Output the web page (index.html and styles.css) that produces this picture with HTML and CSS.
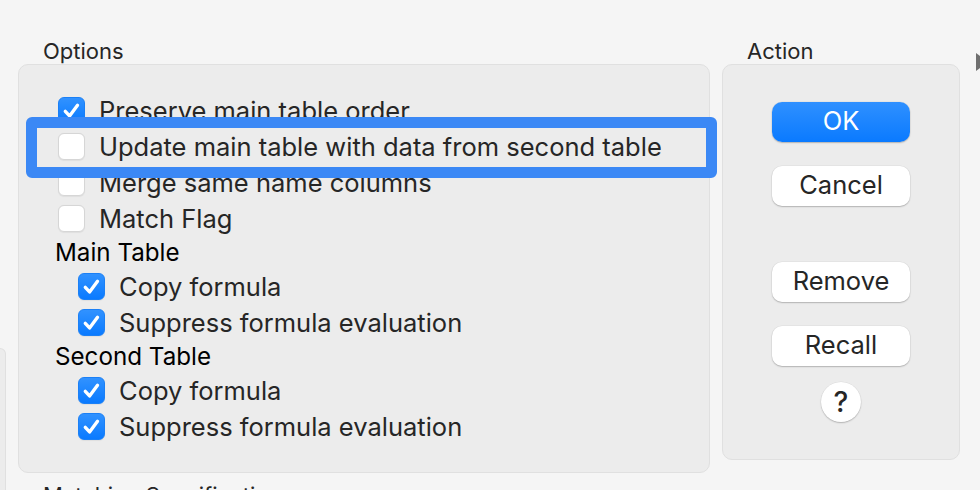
FILE: index.html
```html
<!DOCTYPE html>
<html>
<head>
	<meta charset="UTF-8">
	<title>Merge Tables</title>
	<link rel="stylesheet" href="styles.css">
</head>
<body>
	<div class="window">
		<div class="side-panel"></div>

		<div class="options-col">
			<div class="group-title">Options</div>
			<div class="box options-box">
				<label class="row"><span class="check on"><svg viewBox="0 0 27 27"><path d="M6.8 14.4 L11.4 19.4 L20 7.8"/></svg></span>Preserve main table order</label>
				<label class="row"><span class="check"></span>Update main table with data from second table</label>
				<label class="row"><span class="check"></span>Merge same name columns</label>
				<label class="row"><span class="check"></span>Match Flag</label>

				<div class="sub-title">Main Table</div>
				<label class="row sub"><span class="check on"><svg viewBox="0 0 27 27"><path d="M6.8 14.4 L11.4 19.4 L20 7.8"/></svg></span>Copy formula</label>
				<label class="row sub"><span class="check on"><svg viewBox="0 0 27 27"><path d="M6.8 14.4 L11.4 19.4 L20 7.8"/></svg></span>Suppress formula evaluation</label>

				<div class="sub-title">Second Table</div>
				<label class="row sub"><span class="check on"><svg viewBox="0 0 27 27"><path d="M6.8 14.4 L11.4 19.4 L20 7.8"/></svg></span>Copy formula</label>
				<label class="row sub"><span class="check on"><svg viewBox="0 0 27 27"><path d="M6.8 14.4 L11.4 19.4 L20 7.8"/></svg></span>Suppress formula evaluation</label>
			</div>
			<div class="focus-ring"></div>
			<div class="group-title next">Matching Specification</div>
		</div>

		<div class="action-col">
			<div class="group-title">Action</div>
			<div class="box action-box">
				<button class="btn primary">OK</button>
				<button class="btn cancel">Cancel</button>
				<button class="btn remove">Remove</button>
				<button class="btn recall">Recall</button>
				<button class="btn help">?</button>
			</div>
		</div>

		<div class="disclosure"></div>
	</div>
</body>
</html>
```

FILE: styles.css
```css
body {
	margin: 0;
	background-color: #f5f5f5;
	font-family: Inter, "Noto Sans", sans-serif;
	color: #262626;
	overflow: hidden;
}

.window {
	display: flex;
	align-items: flex-start;
	height: 490px;
	overflow: hidden;
}

.side-panel {
	flex-shrink: 0;
	box-sizing: border-box;
	width: 6px;
	height: 200px;
	margin-top: 348px;
	background-color: #ececec;
	border: 1px solid #e0e0e0;
	border-left: none;
	border-radius: 0 10px 0 0;
}

.options-col {
	position: relative;
	flex-shrink: 0;
	width: 692px;
	margin-left: 12px;
}

.action-col {
	flex-shrink: 0;
	width: 238px;
	margin-left: 12px;
}

.group-title {
	font-size: 22px;
	line-height: 26px;
	margin-top: 38px;
	padding-left: 25px;
	white-space: nowrap;
}

.group-title.next {
	margin-top: 9px;
}

.box {
	box-sizing: border-box;
	background-color: #ececec;
	border: 1px solid #e0e0e0;
	border-radius: 10px;
}

.options-box {
	height: 409px;
	padding: 27px 0 0 39px;
}

.row {
	display: flex;
	align-items: center;
	gap: 14px;
	height: 36px;
	font-size: 25.5px;
	white-space: nowrap;
}

.row.sub {
	padding-left: 20px;
}

.sub-title {
	display: flex;
	align-items: center;
	height: 32px;
	margin-left: -3px;
	font-size: 24.2px;
	color: #000;
}

.check {
	flex-shrink: 0;
	box-sizing: border-box;
	width: 27px;
	height: 27px;
	background-color: #fff;
	border: 1px solid #d6d6d6;
	border-radius: 6px;
	box-shadow: 0 0.5px 1px rgba(0, 0, 0, 0.06);
}

.check.on {
	background: linear-gradient(#3192ff, #0a7aff);
	border-color: #1b80f6;
}

.check svg {
	display: block;
	width: 25px;
	height: 25px;
}

.check svg path {
	fill: none;
	stroke: #fff;
	stroke-width: 3.6;
	stroke-linecap: round;
	stroke-linejoin: round;
}

.focus-ring {
	position: absolute;
	left: 8px;
	top: 117px;
	box-sizing: border-box;
	width: 691px;
	height: 61px;
	border: 11px solid #3b88f5;
	border-radius: 6px;
}

.action-box {
	display: flex;
	flex-direction: column;
	align-items: center;
	height: 396px;
	padding-top: 37px;
}

.btn {
	box-sizing: border-box;
	width: 138px;
	height: 40px;
	padding: 0 0 3px;
	background-color: #fff;
	border: none;
	border-radius: 10px;
	box-shadow: 0 1px 1.5px rgba(0, 0, 0, 0.22), 0 0 0 0.5px rgba(0, 0, 0, 0.06);
	font-family: Inter, "Noto Sans", sans-serif;
	font-size: 25.5px;
	line-height: 30px;
	color: #262626;
}

.btn.primary {
	background: linear-gradient(#2f90ff, #0a7aff);
	color: #fff;
}

.btn.cancel,
.btn.recall {
	margin-top: 24px;
}

.btn.remove {
	margin-top: 56px;
}

.btn.help {
	width: 40px;
	margin-top: 16px;
	padding-bottom: 1px;
	border-radius: 50%;
	font-size: 28px;
	font-weight: 500;
}

.disclosure {
	flex-shrink: 0;
	width: 0;
	height: 0;
	margin-top: 53px;
	margin-left: 16px;
	border-top: 9px solid transparent;
	border-bottom: 9px solid transparent;
	border-left: 12px solid #6f6f6f;
}
```
